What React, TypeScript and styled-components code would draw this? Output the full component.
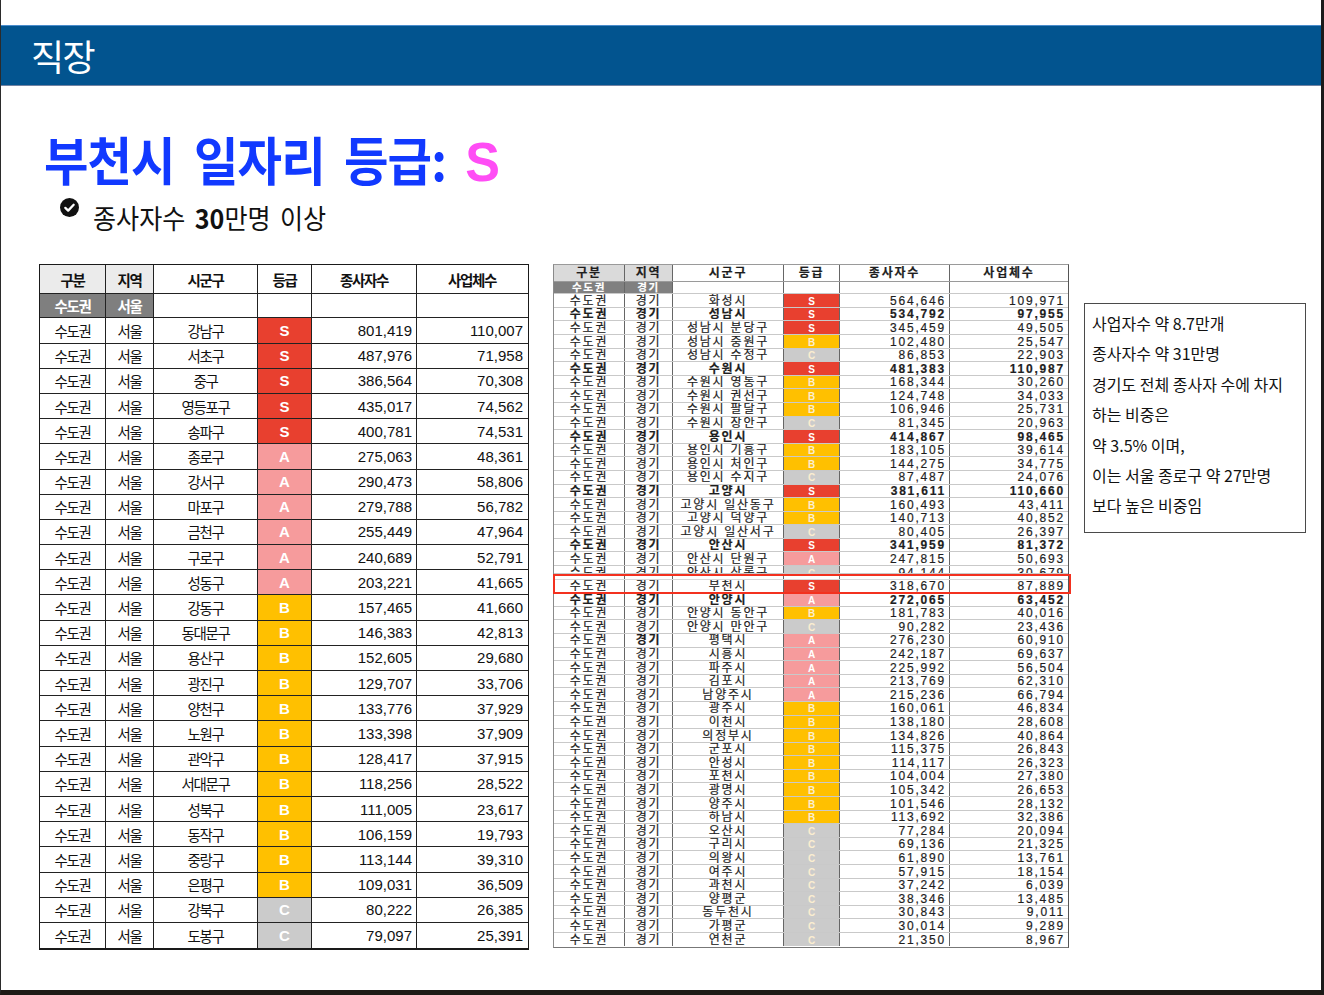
import React from 'react'
import styled, { createGlobalStyle } from 'styled-components'

type Grade = 'S' | 'A' | 'B' | 'C'

const gradeColors: Record<Grade, string> = {
  S: '#e8402f',
  A: '#f69b9c',
  B: '#ffc000',
  C: '#cbcbcb',
}

interface SeoulRow {
  gu: string
  grade: Grade
  workers: string
  firms: string
}

interface GyeonggiRow extends SeoulRow {
  bold?: boolean
  regionBold?: boolean
}

const seoulRows: SeoulRow[] = [
  { gu: '강남구', grade: 'S', workers: '801,419', firms: '110,007' },
  { gu: '서초구', grade: 'S', workers: '487,976', firms: '71,958' },
  { gu: '중구', grade: 'S', workers: '386,564', firms: '70,308' },
  { gu: '영등포구', grade: 'S', workers: '435,017', firms: '74,562' },
  { gu: '송파구', grade: 'S', workers: '400,781', firms: '74,531' },
  { gu: '종로구', grade: 'A', workers: '275,063', firms: '48,361' },
  { gu: '강서구', grade: 'A', workers: '290,473', firms: '58,806' },
  { gu: '마포구', grade: 'A', workers: '279,788', firms: '56,782' },
  { gu: '금천구', grade: 'A', workers: '255,449', firms: '47,964' },
  { gu: '구로구', grade: 'A', workers: '240,689', firms: '52,791' },
  { gu: '성동구', grade: 'A', workers: '203,221', firms: '41,665' },
  { gu: '강동구', grade: 'B', workers: '157,465', firms: '41,660' },
  { gu: '동대문구', grade: 'B', workers: '146,383', firms: '42,813' },
  { gu: '용산구', grade: 'B', workers: '152,605', firms: '29,680' },
  { gu: '광진구', grade: 'B', workers: '129,707', firms: '33,706' },
  { gu: '양천구', grade: 'B', workers: '133,776', firms: '37,929' },
  { gu: '노원구', grade: 'B', workers: '133,398', firms: '37,909' },
  { gu: '관악구', grade: 'B', workers: '128,417', firms: '37,915' },
  { gu: '서대문구', grade: 'B', workers: '118,256', firms: '28,522' },
  { gu: '성북구', grade: 'B', workers: '111,005', firms: '23,617' },
  { gu: '동작구', grade: 'B', workers: '106,159', firms: '19,793' },
  { gu: '중랑구', grade: 'B', workers: '113,144', firms: '39,310' },
  { gu: '은평구', grade: 'B', workers: '109,031', firms: '36,509' },
  { gu: '강북구', grade: 'C', workers: '80,222', firms: '26,385' },
  { gu: '도봉구', grade: 'C', workers: '79,097', firms: '25,391' },
]

// rows above the pasted 부천시 line
const gyeonggiTop: GyeonggiRow[] = [
  { gu: '화성시', grade: 'S', workers: '564,646', firms: '109,971' },
  { gu: '성남시', grade: 'S', workers: '534,792', firms: '97,955', bold: true },
  { gu: '성남시 분당구', grade: 'S', workers: '345,459', firms: '49,505' },
  { gu: '성남시 중원구', grade: 'B', workers: '102,480', firms: '25,547' },
  { gu: '성남시 수정구', grade: 'C', workers: '86,853', firms: '22,903' },
  { gu: '수원시', grade: 'S', workers: '481,383', firms: '110,987', bold: true },
  { gu: '수원시 영통구', grade: 'B', workers: '168,344', firms: '30,260' },
  { gu: '수원시 권선구', grade: 'B', workers: '124,748', firms: '34,033' },
  { gu: '수원시 팔달구', grade: 'B', workers: '106,946', firms: '25,731' },
  { gu: '수원시 장안구', grade: 'C', workers: '81,345', firms: '20,963' },
  { gu: '용인시', grade: 'S', workers: '414,867', firms: '98,465', bold: true },
  { gu: '용인시 기흥구', grade: 'B', workers: '183,105', firms: '39,614' },
  { gu: '용인시 처인구', grade: 'B', workers: '144,275', firms: '34,775' },
  { gu: '용인시 수지구', grade: 'C', workers: '87,487', firms: '24,076' },
  { gu: '고양시', grade: 'S', workers: '381,611', firms: '110,660', bold: true },
  { gu: '고양시 일산동구', grade: 'B', workers: '160,493', firms: '43,411' },
  { gu: '고양시 덕양구', grade: 'B', workers: '140,713', firms: '40,852' },
  { gu: '고양시 일산서구', grade: 'C', workers: '80,405', firms: '26,397' },
  { gu: '안산시', grade: 'S', workers: '341,959', firms: '81,372', bold: true },
  { gu: '안산시 단원구', grade: 'A', workers: '247,815', firms: '50,693' },
]

const cutRow: GyeonggiRow = { gu: '안산시 상록구', grade: 'C', workers: '94,144', firms: '30,679' }
const bucheon: GyeonggiRow = { gu: '부천시', grade: 'S', workers: '318,670', firms: '87,889' }

const gyeonggiBottom: GyeonggiRow[] = [
  { gu: '안양시', grade: 'A', workers: '272,065', firms: '63,452', bold: true },
  { gu: '안양시 동안구', grade: 'B', workers: '181,783', firms: '40,016' },
  { gu: '안양시 만안구', grade: 'C', workers: '90,282', firms: '23,436' },
  { gu: '평택시', grade: 'A', workers: '276,230', firms: '60,910', regionBold: true },
  { gu: '시흥시', grade: 'A', workers: '242,187', firms: '69,637' },
  { gu: '파주시', grade: 'A', workers: '225,992', firms: '56,504' },
  { gu: '김포시', grade: 'A', workers: '213,769', firms: '62,310' },
  { gu: '남양주시', grade: 'A', workers: '215,236', firms: '66,794' },
  { gu: '광주시', grade: 'B', workers: '160,061', firms: '46,834' },
  { gu: '이천시', grade: 'B', workers: '138,180', firms: '28,608' },
  { gu: '의정부시', grade: 'B', workers: '134,826', firms: '40,864' },
  { gu: '군포시', grade: 'B', workers: '115,375', firms: '26,843' },
  { gu: '안성시', grade: 'B', workers: '114,117', firms: '26,323' },
  { gu: '포천시', grade: 'B', workers: '104,004', firms: '27,380' },
  { gu: '광명시', grade: 'B', workers: '105,342', firms: '26,653' },
  { gu: '양주시', grade: 'B', workers: '101,546', firms: '28,132' },
  { gu: '하남시', grade: 'B', workers: '113,692', firms: '32,386' },
  { gu: '오산시', grade: 'C', workers: '77,284', firms: '20,094' },
  { gu: '구리시', grade: 'C', workers: '69,136', firms: '21,325' },
  { gu: '의왕시', grade: 'C', workers: '61,890', firms: '13,761' },
  { gu: '여주시', grade: 'C', workers: '57,915', firms: '18,154' },
  { gu: '과천시', grade: 'C', workers: '37,242', firms: '6,039' },
  { gu: '양평군', grade: 'C', workers: '38,346', firms: '13,485' },
  { gu: '동두천시', grade: 'C', workers: '30,843', firms: '9,011' },
  { gu: '가평군', grade: 'C', workers: '30,014', firms: '9,289' },
  { gu: '연천군', grade: 'C', workers: '21,350', firms: '8,967' },
]

const noteLines = [
  '사업자수 약 8.7만개',
  '종사자수 약 31만명',
  '경기도 전체 종사자 수에 차지',
  '하는 비중은',
  '약 3.5% 이며,',
  '이는 서울 종로구 약 27만명',
  '보다 높은 비중임',
]

const App: React.FC = () => {
  return (
    <>
      <GlobalStyle />
      <Slide>
        <HeaderBar>직장</HeaderBar>
        <Title>
          부천시 일자리 등급: <GradeMark>S</GradeMark>
        </Title>
        <Bullet>
          <CheckIcon viewBox="0 0 20 20">
            <circle cx="10" cy="10" r="10" fill="#111" />
            <path d="M5.6 10.4l3 2.9 5.8-6.2" fill="none" stroke="#fff" strokeWidth="2.4" strokeLinecap="round" strokeLinejoin="round" />
          </CheckIcon>
          <BulletText>
            종사자수 <strong>30</strong>만명 이상
          </BulletText>
        </Bullet>

        <Content>
          <SeoulTable>
            <LRow $h={29}>
              <LCell $bg="#ebebeb" $bold>구분</LCell>
              <LCell $bg="#ebebeb" $bold>지역</LCell>
              <LCell $bold>시군구</LCell>
              <LCell $bold>등급</LCell>
              <LCell $bold>종사자수</LCell>
              <LCell $bold>사업체수</LCell>
            </LRow>
            <LRow $h={24.4}>
              <LCell $bg="#7f7f7f" $color="#fff" $bold>수도권</LCell>
              <LCell $bg="#7f7f7f" $color="#fff" $bold>서울</LCell>
              <LCell />
              <LCell />
              <LCell />
              <LCell />
            </LRow>
            {seoulRows.map((r) => (
              <LRow key={r.gu} $h={25.2}>
                <LCell>수도권</LCell>
                <LCell>서울</LCell>
                <LCell>{r.gu}</LCell>
                <LGrade $grade={r.grade}>{r.grade}</LGrade>
                <LCell $num>{r.workers}</LCell>
                <LCell $num>{r.firms}</LCell>
              </LRow>
            ))}
          </SeoulTable>

          <GyeonggiTable>
            <RRow $h={17} $line="#9a9a9a">
              <RCell $bg="#dadada" $bold>구분</RCell>
              <RCell $bg="#dadada" $bold>지역</RCell>
              <RCell $bold>시군구</RCell>
              <RCell $bold>등급</RCell>
              <RCell $bold>종사자수</RCell>
              <RCell $bold>사업체수</RCell>
            </RRow>
            <RRow $h={12.2}>
              <RCell $bg="#808080" $color="#fff" $bold $small>수도권</RCell>
              <RCell $bg="#808080" $color="#fff" $bold $small>경기</RCell>
              <RCell />
              <RCell />
              <RCell />
              <RCell />
            </RRow>
            {gyeonggiTop.map((r) => (
              <GyeonggiLine key={r.gu} row={r} />
            ))}
            <GyeonggiLine row={cutRow} height={7.5} cut />
            <Highlight>
              <RRow $h={6} $line="#d8d8d8">
                <RCell />
                <RCell />
                <RCell />
                <RCell />
                <RCell />
                <RCell />
              </RRow>
              <GyeonggiLine row={bucheon} />
            </Highlight>
            {gyeonggiBottom.map((r, i) => (
              <GyeonggiLine key={r.gu} row={r} last={i === gyeonggiBottom.length - 1} />
            ))}
          </GyeonggiTable>

          <NoteBox>
            {noteLines.map((line) => (
              <NoteLine key={line}>{line}</NoteLine>
            ))}
          </NoteBox>
        </Content>
      </Slide>
    </>
  )
}

interface GyeonggiLineProps {
  row: GyeonggiRow
  height?: number
  cut?: boolean
  last?: boolean
}

const GyeonggiLine: React.FC<GyeonggiLineProps> = ({ row, height = 13.6, cut, last }) => (
  <RRow $h={height} $cut={cut} $line={last ? 'transparent' : undefined}>
    <RCell $bold={row.bold}>수도권</RCell>
    <RCell $bold={row.bold || row.regionBold}>경기</RCell>
    <RCell $bold={row.bold}>{row.gu}</RCell>
    <RGrade $grade={row.grade}>{row.grade}</RGrade>
    <RCell $num $bold={row.bold}>{row.workers}</RCell>
    <RCell $num $bold={row.bold}>{row.firms}</RCell>
  </RRow>
)

const GlobalStyle = createGlobalStyle`
  html, body {
    margin: 0;
    padding: 0;
    background: #ffffff;
  }
  * {
    box-sizing: border-box;
  }
`

const Slide = styled.div`
  width: 1324px;
  height: 995px;
  padding-top: 25px;
  border-left: 1px solid #2b2b2b;
  border-right: 3px solid #1b1b1b;
  border-bottom: 5px solid #1e1a16;
  background: #fff;
  overflow: hidden;
  font-family: "Noto Sans CJK KR", sans-serif;
`

const HeaderBar = styled.header`
  height: 61px;
  display: flex;
  align-items: center;
  padding: 0 0 2px 30px;
  background: #02548f;
  border-top: 1px solid #4a8ccc;
  border-bottom: 1px solid #7183a3;
  color: #fff;
  font-size: 36px;
  letter-spacing: -1.5px;
`

const Title = styled.h1`
  margin: 43px 0 0 43px;
  width: max-content;
  font-family: "Noto Sans CJK KR", sans-serif;
  font-weight: 700;
  font-size: 52px;
  line-height: 60px;
  letter-spacing: -1px;
  word-spacing: 10px;
  color: #1139ff;
  white-space: nowrap;
  transform: scaleX(0.93);
  transform-origin: left center;
`

const GradeMark = styled.span`
  font-family: "Liberation Sans", sans-serif;
  font-size: 56px;
  color: #ff4df5;
`

const Bullet = styled.div`
  display: flex;
  align-items: flex-start;
  margin: 6px 0 0 59px;
  height: 40px;
`

const CheckIcon = styled.svg`
  width: 19px;
  height: 19px;
  flex-shrink: 0;
`

const BulletText = styled.p`
  margin: 2px 0 0 14px;
  font-size: 27px;
  line-height: 36px;
  word-spacing: 4px;
  color: #111;
  white-space: nowrap;
  transform: scaleX(0.93);
  transform-origin: left center;

  strong {
    font-weight: 700;
  }
`

const Content = styled.div`
  display: flex;
  align-items: flex-start;
  margin-top: 26px;
  padding-left: 38px;
`

const SeoulTable = styled.div`
  width: 490px;
  border: 1.5px solid #1a1a1a;
  border-bottom-width: 2px;
`

const LRow = styled.div<{ $h: number }>`
  display: grid;
  grid-template-columns: 66px 48px 104px 54px 105px 110px;
  height: ${(p) => p.$h}px;
  border-bottom: 1px solid #222;

  &:last-child {
    border-bottom: none;
  }
`

const LCell = styled.div<{ $bg?: string; $color?: string; $bold?: boolean; $num?: boolean }>`
  display: flex;
  align-items: center;
  justify-content: ${(p) => (p.$num ? 'flex-end' : 'center')};
  padding-right: ${(p) => (p.$num ? '4px' : '0')};
  border-right: 1px solid #222;
  background: ${(p) => p.$bg ?? 'transparent'};
  color: ${(p) => p.$color ?? '#111'};
  font-family: ${(p) => (p.$num ? '"Liberation Sans", sans-serif' : '"Noto Sans CJK KR", sans-serif')};
  font-size: ${(p) => (p.$num ? '15px' : '14.5px')};
  font-weight: ${(p) => (p.$bold ? 700 : 400)};
  letter-spacing: ${(p) => (p.$num ? '0' : '-1.4px')};
  white-space: nowrap;

  &:last-child {
    border-right: none;
  }
`

const LGrade = styled(LCell)<{ $grade: Grade }>`
  background: ${(p) => gradeColors[p.$grade]};
  color: #fff;
  font-family: "Liberation Sans", sans-serif;
  font-weight: 700;
  font-size: 15px;
  letter-spacing: 0;
`

const GyeonggiTable = styled.div`
  width: 516px;
  margin-left: 24px;
  border-left: 1px solid #8a8a8a;
  border-right: 1px solid #555;
  border-top: 1px solid #9a9a9a;
  border-bottom: 1px solid #777;
`

// a cut row keeps full-height cells and shows only their top part
const RRow = styled.div<{ $h: number; $cut?: boolean; $line?: string }>`
  display: grid;
  grid-template-columns: 71px 48px 111px 56px 110px 118px;
  grid-auto-rows: ${(p) => (p.$cut ? '13px' : '1fr')};
  height: ${(p) => p.$h}px;
  overflow: hidden;
  border-bottom: 1px solid ${(p) => p.$line ?? '#c9c9c9'};
`

const RCell = styled.div<{ $bg?: string; $color?: string; $bold?: boolean; $num?: boolean; $small?: boolean }>`
  display: flex;
  align-items: center;
  justify-content: ${(p) => (p.$num ? 'flex-end' : 'center')};
  min-height: 0;
  padding-top: ${(p) => (p.$small ? '0' : '1.5px')};
  padding-right: ${(p) => (p.$num ? '3px' : '0')};
  border-right: 1px solid #666;
  background: ${(p) => p.$bg ?? 'transparent'};
  color: ${(p) => p.$color ?? '#1e1e1e'};
  font-family: "Liberation Sans", "Noto Sans CJK KR", sans-serif;
  font-size: ${(p) => (p.$small ? '10.5px' : '12px')};
  line-height: ${(p) => (p.$small ? '11px' : '11px')};
  font-weight: ${(p) => (p.$bold ? 700 : 400)};
  letter-spacing: ${(p) => (p.$small ? '1.6px' : '1.8px')};
  -webkit-text-stroke: 0.2px currentColor;
  white-space: nowrap;

  &:last-child {
    border-right: none;
  }
`

const RGrade = styled(RCell)<{ $grade: Grade }>`
  background: ${(p) => gradeColors[p.$grade]};
  color: ${(p) => (p.$grade === 'S' || p.$grade === 'A' ? '#fff' : '#fbeed0')};
  font-weight: 700;
  font-size: 10px;
  letter-spacing: 0;
  -webkit-text-stroke: 0;
`

const Highlight = styled.div`
  position: relative;

  &::after {
    content: '';
    position: absolute;
    inset: 0 -3px -1px -1px;
    border: 2px solid #f3311f;
    pointer-events: none;
  }
`

const NoteBox = styled.div`
  width: 222px;
  height: 230px;
  margin: 39px 0 0 15px;
  padding: 4px 0 0 7px;
  border: 1px solid #4a4a4a;
`

const NoteLine = styled.p`
  margin: 0;
  font-size: 16px;
  line-height: 30.4px;
  color: #111;
  white-space: nowrap;
`

export default App
